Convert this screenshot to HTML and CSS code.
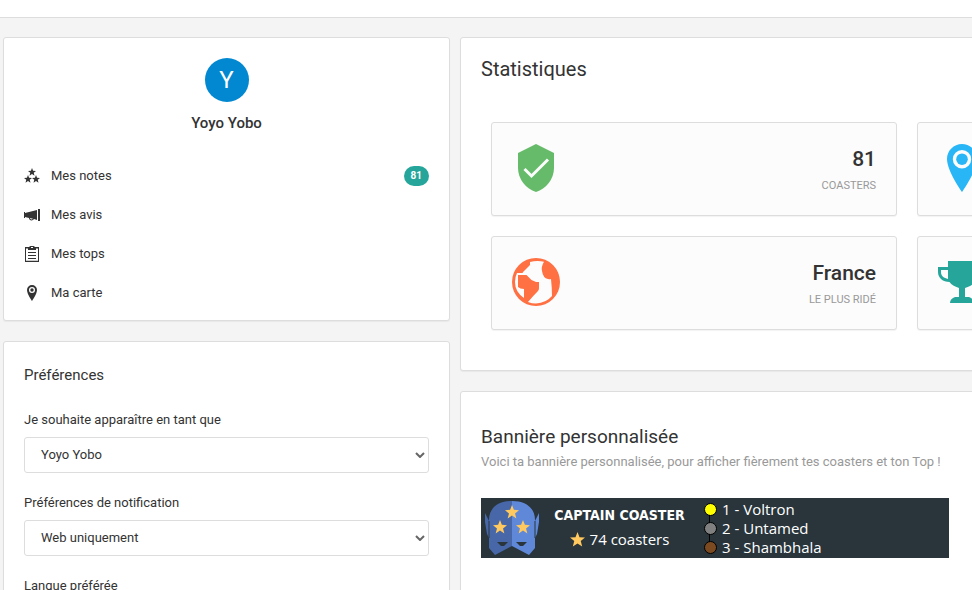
FILE: index.html
```
<!DOCTYPE html>
<html lang="fr">
<head>
  <meta charset="UTF-8">
  <meta name="viewport" content="width=device-width, initial-scale=1.0">
  <title>Mon profil - Captain Coaster</title>
  <link rel="stylesheet" href="styles.css">
</head>
<body>
  <!-- Shared shapes -->
  <svg class="symbols" aria-hidden="true">
    <symbol id="star" viewBox="0 0 24 24">
      <path d="M12 0l3.200 8.300 8.800.5-6.800 5.600 2.300 8.600-7.500-4.800L4.500 23l2.300-8.600L0 8.800l8.800-.5z"/>
    </symbol>
  </svg>

  <header class="page-header"></header>

  <main class="content">
    <div class="sidebar">
      <section class="panel profile">
        <div class="avatar">Y</div>
        <h6 class="profile-name">Yoyo Yobo</h6>
        <nav class="profile-nav">
          <a href="#notes">
            <svg class="icon" viewBox="0 0 16 16"><use href="#star" x="4" y="0" width="8" height="8"/><use href="#star" x="0" y="7" width="8" height="8"/><use href="#star" x="8" y="7" width="8" height="8"/></svg>
            <span>Mes notes</span>
            <span class="badge">81</span>
          </a>
          <a href="#avis">
            <svg class="icon" viewBox="0 0 16 16"><path d="M0 5h1v1l12-3v10l-3-1c-1 2-5 2-5-1l-4-1v1H0zM6 11c0 1.500 2 2 3 .800zM14 2h2v12h-2z" fill-rule="evenodd"/></svg>
            <span>Mes avis</span>
          </a>
          <a href="#tops">
            <svg class="icon" viewBox="0 0 16 16"><path d="M1 1h4c1-1 1-1 2-1h2c1 0 1 0 2 1h4v15H1zM2 2.500v12.300h12V2.500h-2V4H4V2.500zM7 1v1h2V1zM4 6h8v1H4zM4 9h8v1H4zM4 12h8v1H4z" fill-rule="evenodd"/></svg>
            <span>Mes tops</span>
          </a>
          <a href="#carte">
            <svg class="icon" viewBox="0 0 16 16"><path d="M8 0a5 5 0 0 0-5 5c0 4 5 11 5 11s5-7 5-11a5 5 0 0 0-5-5zm0 2a3 3 0 1 1 0 6 3 3 0 0 1 0-6z" fill-rule="evenodd"/><circle cx="8" cy="5" r="1.700"/></svg>
            <span>Ma carte</span>
          </a>
        </nav>
      </section>

      <section class="panel preferences">
        <h6 class="panel-title">Préférences</h6>
        <form>
          <div class="form-group">
            <label for="displayName">Je souhaite apparaître en tant que</label>
            <div class="select-wrap">
              <select id="displayName">
                <option>Yoyo Yobo</option>
                <option>Yoyo</option>
              </select>
              <svg class="chevron" viewBox="0 0 10 6"><path d="M1 1l4 4 4-4"/></svg>
            </div>
          </div>
          <div class="form-group">
            <label for="notifications">Préférences de notification</label>
            <div class="select-wrap">
              <select id="notifications">
                <option>Web uniquement</option>
                <option>Web et email</option>
              </select>
              <svg class="chevron" viewBox="0 0 10 6"><path d="M1 1l4 4 4-4"/></svg>
            </div>
          </div>
          <div class="form-group">
            <label for="language">Langue préférée</label>
            <div class="select-wrap">
              <select id="language">
                <option>Français</option>
                <option>English</option>
              </select>
              <svg class="chevron" viewBox="0 0 10 6"><path d="M1 1l4 4 4-4"/></svg>
            </div>
          </div>
        </form>
      </section>
    </div>

    <div class="main-column">
      <section class="panel statistics">
        <h4>Statistiques</h4>
        <div class="stats-grid">
          <div class="stat">
            <svg class="stat-icon green" viewBox="0 0 48 48"><path d="M24 0L6 9v15c0 11 8 21 18 24 10-3 18-13 18-24V9z"/><path class="tick" d="M12.500 25l7 7L36 15.500"/></svg>
            <div class="stat-text">
              <h3>81</h3>
              <span>coasters</span>
            </div>
          </div>
          <div class="stat">
            <svg class="stat-icon blue" viewBox="0 0 48 48"><path d="M24 0C15.700 0 9 6.700 9 15c0 12 15 33 15 33s15-21 15-33c0-8.300-6.700-15-15-15zm0 6a9.200 9.200 0 1 1 0 18.400A9.200 9.200 0 0 1 24 6z" fill-rule="evenodd"/><circle cx="24" cy="15.200" r="5.800"/></svg>
          </div>
          <div class="stat">
            <svg class="stat-icon orange" viewBox="0 0 48 48"><circle cx="24" cy="24" r="24"/><path class="land" d="M18 4q7-2 14-.3-3 5-2 9.300 1 7 6 8 2 .5 3 0 1 9 1 17-6 7-16 7.500-4 0-8-1.500 5-6 10-11 1-1 1-3v-6h-3l-4.500-2-5-5H6v12q2 2 6 2v9Q3 34 3 24q0-5 2-9h5.500q.5-1 1-1.500L18 7z"/></svg>
            <div class="stat-text">
              <h3>France</h3>
              <span>le plus ridé</span>
            </div>
          </div>
          <div class="stat">
            <svg class="stat-icon teal" viewBox="0 0 48 48"><path d="M10 3h28v6h10v5c0 6-5 10-11.500 10-2 3-5 4.500-9.500 6v9h4c3 1 5 3 5 6H12c0-3 2-5 5-6h4v-9c-4.500-1.500-7.500-3-9.500-6C5 24 0 20 0 14V9h10zM3 12v2c0 4 3 6 7 7V12zM45 12v2c0 4-3 6-7 7V12z" fill-rule="evenodd"/></svg>
          </div>
        </div>
      </section>

      <section class="panel banner-panel">
        <h5>Bannière personnalisée</h5>
        <p>Voici ta bannière personnalisée, pour afficher fièrement tes coasters et ton Top !</p>
        <div class="banner">
          <svg class="mask" viewBox="0 0 54 56">
            <path fill="#4767a8" d="M0 14l4 8v17l-2-4-2-12zM4 21C4 9 13 2 27 2v45L10 56 4 49z"/>
            <path fill="#5f88d8" d="M54 14l-4 8v17l2-4 2-12zM50 21C50 9 41 2 27 2v45l17 9 6-7z"/>
            <path fill="#29353b" d="M12 43h11l-4 4h-3zM42 43H31l4 4h3z"/>
            <path stroke="#29353b" fill="none" d="M4 22v17M50 22v17"/>
            <g fill="#ffc95f">
              <use href="#star" x="20" y="6" width="14" height="14"/>
              <use href="#star" x="8" y="21" width="14" height="14"/>
              <use href="#star" x="31" y="21" width="14" height="14"/>
            </g>
          </svg>
          <div class="banner-brand">
            <strong>CAPTAIN COASTER</strong>
            <span class="banner-count"><svg viewBox="0 0 24 24"><use href="#star"/></svg>74 coasters</span>
          </div>
          <ol class="banner-top">
            <li class="first">1 - Voltron</li>
            <li class="second">2 - Untamed</li>
            <li class="third">3 - Shambhala</li>
          </ol>
        </div>
      </section>
    </div>
  </main>
</body>
</html>
```
FILE: styles.css
```
/* Base styles */
* {
  box-sizing: border-box;
}

html {
  scrollbar-width: none;
}

body {
  margin: 0;
  background: #f4f4f4;
  color: #333;
  font-family: Roboto, "Liberation Sans", sans-serif;
  font-size: 13px;
  line-height: 20px;
  overflow-x: hidden;
}

h3, h4, h5, h6, p {
  margin: 0;
  font-weight: 400;
}

.symbols {
  display: none;
}

.page-header {
  height: 18px;
  background: #fff;
  border-bottom: 1px solid #ddd;
}

/* Layout, the right column runs past the window edge */
.content {
  display: grid;
  grid-template-columns: 1fr 2fr;
  gap: 10px;
  width: 139%;
  padding-top: 19px;
  margin-left: 3px;
}

.sidebar,
.main-column {
  display: flex;
  flex-direction: column;
  gap: 20px;
}

.panel {
  padding: 20px;
  background: #fff;
  border: 1px solid #ddd;
  border-radius: 3px;
  box-shadow: 0 1px 1px rgba(0, 0, 0, 0.05);
}

/* Profile */
.profile {
  padding-bottom: 8px;
}

.avatar {
  width: 44px;
  height: 44px;
  margin: 0 auto 10px;
  border-radius: 50%;
  background: #0288d1;
  color: #fff;
  font-size: 24px;
  line-height: 44px;
  text-align: center;
}

.profile-name {
  font-size: 15px;
  line-height: 22px;
  font-weight: 500;
  text-align: center;
}

.profile-nav {
  margin-top: 22px;
}

.profile-nav a {
  display: flex;
  align-items: center;
  gap: 11px;
  height: 39px;
  color: #333;
  text-decoration: none;
}

.icon {
  width: 16px;
  height: 16px;
  fill: #333;
}

.badge {
  margin-left: auto;
  padding: 0 7px;
  border-radius: 10px;
  background: #26a69a;
  color: #fff;
  font-size: 10px;
  font-weight: 700;
}

/* Preferences */
.panel-title {
  margin: 2px 0 24px;
  font-size: 15px;
  line-height: 22px;
}

.form-group {
  margin-bottom: 20px;
}

.form-group label {
  display: block;
  margin-bottom: 7px;
}

.select-wrap {
  position: relative;
}

.select-wrap select {
  display: block;
  width: 100%;
  height: 36px;
  padding: 0 16px;
  appearance: none;
  background: #fff;
  border: 1px solid #ddd;
  border-radius: 3px;
  color: #333;
  font: inherit;
}

.chevron {
  position: absolute;
  top: 15px;
  right: 4px;
  width: 10px;
  height: 6px;
  fill: none;
  stroke: #666;
  stroke-width: 2;
  pointer-events: none;
}

/* Statistics */
.statistics {
  padding-bottom: 40px;
}

.statistics h4 {
  font-size: 20px;
  line-height: 22px;
}

.stats-grid {
  display: grid;
  grid-template-columns: 1fr 1fr;
  gap: 20px;
  padding: 42px 10px 0;
}

.stat {
  display: flex;
  justify-content: space-between;
  align-items: flex-start;
  min-height: 94px;
  padding: 20px;
  background: #fcfcfc;
  border: 1px solid #ddd;
  border-radius: 3px;
  box-shadow: 0 1px 1px rgba(0, 0, 0, 0.05);
}

.stat-icon {
  width: 48px;
  height: 48px;
  margin-top: 1px;
}

.stat-text {
  text-align: right;
}

.stat-text h3 {
  font-size: 21px;
  line-height: 32px;
  font-weight: 500;
}

.stat-text span {
  display: block;
  color: #999;
  font-size: 11px;
  line-height: 22px;
  text-transform: uppercase;
}

.green {
  fill: #66bb6a;
}

.blue {
  fill: #29b6f6;
}

.orange {
  fill: #ff7043;
}

.teal {
  fill: #26a69a;
}

.tick {
  fill: none;
  stroke: #fcfcfc;
  stroke-width: 3;
}

.land {
  fill: #fcfcfc;
}

.stat {
  padding-bottom: 18px;
}

/* Banner */
.banner-panel {
  padding-top: 32px;
  padding-bottom: 60px;
}

.banner-panel h5 {
  font-size: 19px;
  line-height: 26px;
}

.banner-panel p {
  margin-bottom: 26px;
  padding-top: 2px;
  color: #999;
}

.banner {
  display: flex;
  width: 468px;
  height: 60px;
  padding-left: 4px;
  background: #29353b;
  color: #fff;
  font-family: "Open Sans", "Noto Sans", sans-serif;
  font-size: 15px;
}

.mask {
  width: 54px;
  height: 56px;
  margin-top: 1px;
}

.banner-brand {
  display: flex;
  flex-direction: column;
  align-items: center;
  width: 161px;
  padding-top: 4px;
}

.banner-brand strong {
  font-family: "Liberation Sans Narrow", "DejaVu Sans Condensed", sans-serif;
  font-size: 14px;
  line-height: 26px;
  white-space: nowrap;
}

.banner-count {
  display: flex;
  align-items: center;
  gap: 5px;
  line-height: 22px;
}

.banner-count svg {
  width: 15px;
  height: 15px;
  fill: #ffc95f;
}

.banner-top {
  margin: 0;
  padding: 2px 0 0 4px;
  list-style: none;
}

.banner-top li {
  display: flex;
  align-items: center;
  gap: 5px;
  position: relative;
  line-height: 19px;
}

.banner-top li::before {
  content: "";
  width: 11px;
  height: 11px;
  border: 1px solid #000;
  border-radius: 50%;
}

/* Line that joins two dots */
.banner-top li + li::after {
  content: "";
  position: absolute;
  top: -4px;
  left: 5px;
  width: 1px;
  height: 8px;
  background: #000;
}

.first::before {
  background: #ff0;
}

.second::before {
  background: #808080;
}

.third::before {
  background: #7b4a20;
}
```
